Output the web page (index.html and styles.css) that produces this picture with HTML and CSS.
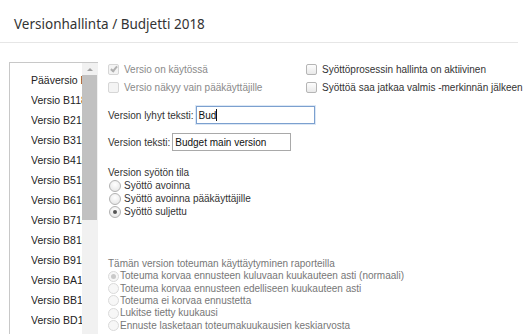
FILE: index.html
```html
<!DOCTYPE html>
<html lang="fi">
<head>
    <meta charset="UTF-8">
    <title>Versionhallinta</title>
    <link rel="stylesheet" href="styles.css">
</head>
<body>
    <div class="page-header">
        <h1>Versionhallinta / Budjetti 2018</h1>
    </div>

    <div class="content">
        <div class="version-list">
            <ul class="items">
                <li>Pääversio B</li>
                <li>Versio B118</li>
                <li>Versio B218</li>
                <li>Versio B318</li>
                <li>Versio B418</li>
                <li>Versio B518</li>
                <li>Versio B618</li>
                <li>Versio B718</li>
                <li>Versio B818</li>
                <li>Versio B918</li>
                <li>Versio BA18</li>
                <li>Versio BB18</li>
                <li>Versio BD18</li>
            </ul>
            <div class="scrollbar">
                <div class="arrow-up"></div>
                <div class="thumb"></div>
            </div>
        </div>

        <div class="details">
            <div class="flags">
                <label class="check disabled"><span class="box checked"></span>Versio on käytössä</label>
                <label class="check"><span class="box"></span>Syöttöprosessin hallinta on aktiivinen</label>
                <label class="check disabled"><span class="box"></span>Versio näkyy vain pääkäyttäjille</label>
                <label class="check"><span class="box"></span>Syöttöä saa jatkaa valmis -merkinnän jälkeen</label>
            </div>

            <div class="field field-short">
                <span class="field-label">Version lyhyt teksti:</span>
                <span class="text-input focused">Bud<span class="caret"></span></span>
            </div>
            <div class="field">
                <span class="field-label">Version teksti:</span>
                <span class="text-input">Budget main version</span>
            </div>

            <div class="input-state">
                <div class="group-title">Version syötön tila</div>
                <label class="radio"><span class="dot"></span>Syöttö avoinna</label>
                <label class="radio"><span class="dot"></span>Syöttö avoinna pääkäyttäjille</label>
                <label class="radio"><span class="dot selected"></span>Syöttö suljettu</label>
            </div>

            <div class="actuals disabled">
                <div class="group-title">Tämän version toteuman käyttäytyminen raporteilla</div>
                <label class="radio small"><span class="dot selected"></span>Toteuma korvaa ennusteen kuluvaan kuukauteen asti (normaali)</label>
                <label class="radio small"><span class="dot"></span>Toteuma korvaa ennusteen edelliseen kuukauteen asti</label>
                <label class="radio small"><span class="dot"></span>Toteuma ei korvaa ennustetta</label>
                <label class="radio small"><span class="dot"></span>Lukitse tietty kuukausi</label>
                <label class="radio small"><span class="dot"></span>Ennuste lasketaan toteumakuukausien keskiarvosta</label>
            </div>
        </div>
    </div>
</body>
</html>
```

FILE: styles.css
```css
body {
    margin: 0;
    font-family: "Liberation Sans", Arial, sans-serif;
    font-size: 10px;
    color: #222;
    background-color: white;
    overflow: hidden;
    height: 334px;
}
.page-header {
    width: 518px;
    height: 42px;
    border-bottom: 1px solid #e6e6e6;
}
.page-header h1 {
    margin: 0;
    padding: 15px 0 0 14px;
    font-family: "Noto Sans", sans-serif;
    font-size: 13.5px;
    font-weight: normal;
    color: #333;
    line-height: 18px;
}
.content {
    display: flex;
    align-items: flex-start;
    padding-top: 19px;
}
.version-list {
    display: flex;
    flex: none;
    margin-left: 9px;
    width: 88px;
    height: 271px;
    border: 1px solid #c8c8c8;
    border-right: none;
    border-bottom: none;
    overflow: hidden;
}
.items {
    list-style: none;
    margin: 0;
    padding: 7px 0 0 21px;
    width: 51px;
    overflow: hidden;
    flex: none;
    font-size: 10.5px;
}
.items li {
    height: 20px;
    line-height: 20px;
    white-space: nowrap;
    overflow: hidden;
}
.scrollbar {
    width: 16px;
    background-color: #f1f1f1;
    display: flex;
    flex-direction: column;
    align-items: center;
}
.arrow-up {
    margin-top: 5px;
    width: 0;
    height: 0;
    border-left: 3px solid transparent;
    border-right: 3px solid transparent;
    border-bottom: 3px solid #a3a3a3;
}
.thumb {
    margin-top: 4px;
    width: 15px;
    margin-right: 1px;
    height: 145px;
    background-color: #c1c1c1;
}
.details {
    margin-left: 10px;
    margin-top: -2px;
}
.flags {
    display: grid;
    grid-template-columns: 198px auto;
}
.check {
    display: flex;
    align-items: center;
    height: 18px;
    white-space: nowrap;
    color: #333;
}
.check.disabled {
    color: #8a8a8a;
}
.box {
    width: 9px;
    height: 9px;
    border: 1px solid #b5b5b5;
    border-radius: 2px;
    background: linear-gradient(#fdfdfd, #e9e9e9);
    margin-right: 5px;
    position: relative;
}
.disabled .box {
    border-color: #d6d6d6;
    background: #f4f4f4;
}
.box.checked::after {
    content: "";
    position: absolute;
    left: 3px;
    top: 0px;
    width: 2px;
    height: 5px;
    border: solid #b0b0b0;
    border-width: 0 2px 2px 0;
    transform: rotate(40deg);
}
.field {
    display: flex;
    align-items: center;
    margin-top: 9px;
    white-space: nowrap;
}
.field-short {
    margin-top: 10px;
}
.field-label {
    margin-right: 2px;
    color: #333;
}
.text-input {
    display: inline-flex;
    align-items: center;
    box-sizing: border-box;
    width: 119px;
    height: 18px;
    padding-left: 2px;
    border: 1px solid #a9a9a9;
    color: #111;
    background: white;
}
.text-input.focused {
    border-color: #7ca0cf;
    box-shadow: 0 0 0 1px #dbe7f5;
}
.caret {
    display: inline-block;
    width: 1px;
    height: 12px;
    background: #111;
}
.input-state {
    margin-top: 15px;
    line-height: 13px;
}
.group-title {
    color: #333;
}
.radio {
    display: flex;
    align-items: center;
    height: 13px;
    white-space: nowrap;
    color: #333;
}
.dot {
    width: 10px;
    height: 10px;
    border: 1px solid #b2b2b2;
    border-radius: 50%;
    background: radial-gradient(circle at 50% 35%, #ffffff, #e2e2e2);
    margin-left: 1px;
    margin-right: 3px;
    position: relative;
    flex: none;
}
.dot.selected::after {
    content: "";
    position: absolute;
    left: 3px;
    top: 3px;
    width: 4px;
    height: 4px;
    border-radius: 50%;
    background: #555;
}
.actuals {
    margin-top: 40px;
    line-height: 12px;
}
.actuals .group-title,
.actuals .radio {
    color: #777;
}
.radio.small {
    height: 12.4px;
}
.radio.small .dot {
    width: 9px;
    height: 9px;
    margin-left: 0;
    margin-right: 1px;
    border-color: #dadada;
    background: #f7f7f7;
}
.radio.small .dot.selected::after {
    left: 2px;
    top: 2px;
    width: 5px;
    height: 5px;
    background: #c9c9c9;
}
```
